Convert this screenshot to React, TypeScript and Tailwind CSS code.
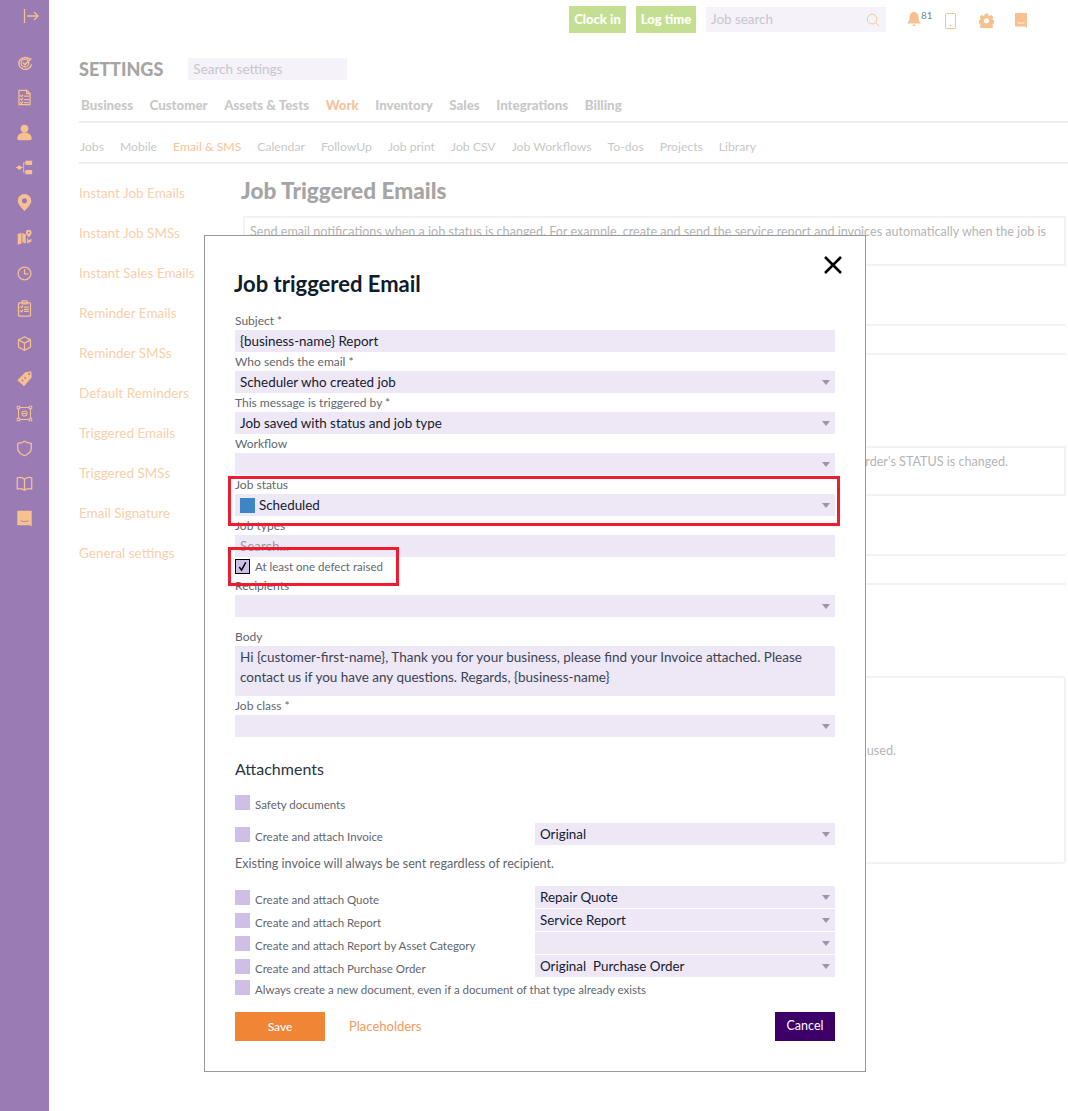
import type { ReactNode } from 'react'

const peach = '#f6c08f'
const iconSize = 'w-[17px] h-[17px]'

function Icon({ children }: { children: ReactNode }) {
  return (
    <svg viewBox="0 0 20 20" className={iconSize} fill="none" stroke={peach} strokeWidth="1.5" strokeLinecap="round" strokeLinejoin="round">
      {children}
    </svg>
  )
}

const sideIcons: ReactNode[] = [
  <Icon key="a">
    <path d="M16.5 6.5A7.500 7 0 1 0 18 13" strokeWidth="1.7" />
    <circle cx="10.5" cy="10.5" r="4.5" />
    <path d="M8.5 10.5l2 2 7-7" strokeWidth="1.7" />
  </Icon>,
  <Icon key="b">
    <path d="M3.5 1.5h9l4 4v13h-13z" />
    <path d="M12.5 1.5v4h4" />
    <path d="M5.5 8l1 1 1.5-2M5.5 12l1 1 1.5-2M5.5 16l1 1 1.5-2M10 8.5h4.5M10 12.5h4.5M10 16h4.5" />
  </Icon>,
  <svg key="c" viewBox="0 0 20 20" className={iconSize} fill={peach}>
    <circle cx="10" cy="5.5" r="4.5" />
    <path d="M1.500 17c0-4 3.500-7 8.500-7s8.500 3 8.500 7c0 1.500-1 2-2 2h-13c-1 0-2-.5-2-2z" />
  </svg>,
  <svg key="d" viewBox="0 0 20 20" className={iconSize} fill={peach}>
    <rect x="11" y="2" width="8" height="5" />
    <rect x="11" y="13" width="8" height="5" />
    <circle cx="4" cy="10" r="2.5" />
    <path d="M0 9.500h8v1H0zM8.500 4H11v1H9.500v10H11v1H8.500z" />
  </svg>,
  <svg key="e" viewBox="0 0 20 20" className={iconSize} fill={peach}>
    <path fillRule="evenodd" d="M10 0a8 8 0 0 1 8 8c0 4.500-5 9-8 12-3-3-8-7.500-8-12a8 8 0 0 1 8-8zm0 5a3 3 0 1 0 0 6 3 3 0 0 0 0-6z" />
  </svg>,
  <svg key="f" viewBox="0 0 20 20" className={iconSize} fill={peach}>
    <path d="M2 6l4.500-1.500V17L2 18.500zM7.500 4.500l4 2V17l-4-1.500zM13 10v6.800l5-1.800V11l-3 2.500z" />
    <path fillRule="evenodd" d="M15 1a3.300 3.300 0 0 1 3.300 3.300c0 2-2.300 4.200-3.300 5.700-1-1.500-3.300-3.700-3.300-5.700A3.300 3.300 0 0 1 15 1zm0 2.200a1.100 1.100 0 1 0 0 2.200 1.100 1.100 0 0 0 0-2.200z" />
  </svg>,
  <Icon key="g">
    <circle cx="10" cy="10" r="7.5" />
    <path d="M10 5.500v5h4" />
  </Icon>,
  <Icon key="h">
    <rect x="3" y="3.500" width="14" height="15.500" rx="1" />
    <rect x="7" y="1" width="6" height="3.500" rx=".5" />
    <path d="M5.500 8l1 1 1.500-2M5.500 13l1 1 1.500-2M10 8.500h4.500M10 11h4.500M10 13.500h4.500" />
  </Icon>,
  <Icon key="i">
    <path d="M10 2l7 3.800v8.400L10 18l-7-3.800V5.800z" />
    <path d="M3 5.800l7 3.800 7-3.800M10 9.600V18" />
  </Icon>,
  <svg key="j" viewBox="0 0 20 20" className={iconSize} fill={peach}>
    <path fillRule="evenodd" d="M11 2.500l7-1 .5 7-9 10.500L1.500 12zM15.500 3.500a1.200 1.200 0 1 0 0 2.400 1.200 1.200 0 0 0 0-2.400z" />
    <path d="M7 11.500l1.500 1.500M10 8.500l1.500 1.500" stroke="#9b7bb3" strokeWidth="1.4" />
  </svg>,
  <Icon key="k">
    <rect x="3" y="3" width="14" height="14" strokeWidth="1.2" />
    <rect x="1.5" y="1.5" width="3" height="3" fill="#9b7bb3" strokeWidth="1.2" />
    <rect x="15.5" y="1.5" width="3" height="3" fill="#9b7bb3" strokeWidth="1.2" />
    <rect x="1.5" y="15.5" width="3" height="3" fill="#9b7bb3" strokeWidth="1.2" />
    <rect x="15.5" y="15.5" width="3" height="3" fill="#9b7bb3" strokeWidth="1.2" />
    <circle cx="10" cy="10" r="3" strokeWidth="1.2" />
    <path d="M8.500 10h3" strokeWidth="1.2" />
  </Icon>,
  <Icon key="l">
    <path d="M10 1.500c2 1.500 5 2.200 8 2.400v5.600c0 4.500-3.500 7.300-8 9-4.500-1.700-8-4.500-8-9V3.900c3-.2 6-.9 8-2.400z" />
  </Icon>,
  <Icon key="m">
    <path d="M10 5C8 3 4.500 2.500 1.500 3.500v13c3-.8 6.500-.5 8.500 1.500 2-2 5.500-2.300 8.500-1.500v-13C15.500 2.500 12 3 10 5zM10 5v13" />
  </Icon>,
  <svg key="n" viewBox="0 0 20 20" className={iconSize} fill={peach}>
    <path d="M1.500 1h17v18.500l-2.500-1.500H1.500z" />
    <path d="M5.500 12.500c2.500 1.500 6.500 1.500 9 0" stroke="#9b7bb3" strokeWidth="1" fill="none" />
  </svg>,
]

const tabs = ['Business', 'Customer', 'Assets & Tests', 'Work', 'Inventory', 'Sales', 'Integrations', 'Billing']
const subTabs = ['Jobs', 'Mobile', 'Email & SMS', 'Calendar', 'FollowUp', 'Job print', 'Job CSV', 'Job Workflows', 'To-dos', 'Projects', 'Library']
const leftNav = ['Instant Job Emails', 'Instant Job SMSs', 'Instant Sales Emails', 'Reminder Emails', 'Reminder SMSs', 'Default Reminders', 'Triggered Emails', 'Triggered SMSs', 'Email Signature', 'General settings']

function Caret() {
  return <span className="ml-auto w-0 h-0 border-x-[4px] border-x-transparent border-t-[5px] border-t-[#9d94a8]" />
}

function Field({ label, value, caret = true, children }: { label: string; value?: string; caret?: boolean; children?: ReactNode }) {
  return (
    <div>
      <div className="h-[19px] text-[12px] leading-[19px] text-[#5f6670]">{label}</div>
      <div className="h-[22px] bg-[#ede7f6] flex items-center px-[5px] text-[13.4px] text-[#14202e]">
        {children}
        {value}
        {caret && <Caret />}
      </div>
    </div>
  )
}

function SmallSelect({ value }: { value?: string }) {
  return (
    <div className="w-[300px] h-[22px] bg-[#ede7f6] flex items-center px-[5px] text-[13.4px] text-[#14202e] whitespace-pre">
      {value}
      <Caret />
    </div>
  )
}

function Check({ label }: { label: string }) {
  return (
    <div className="flex items-center gap-[5px] text-[11.5px] leading-[15px] text-[#5f6670] whitespace-nowrap">
      <span className="w-[15px] h-[15px] bg-[#cfbfe6] shrink-0" />
      <span className="translate-y-[2px]">{label}</span>
    </div>
  )
}

function AttachRow({ label, value }: { label: string; value?: string }) {
  return (
    <div className="h-[22px] flex items-center justify-between mb-[1px]">
      <Check label={label} />
      <SmallSelect value={value} />
    </div>
  )
}

export default function App() {
  return (
    <div className="relative w-[1068px] h-[1111px] overflow-hidden bg-white flex font-['Lato',sans-serif]">
      <aside className="w-[49px] shrink-0 bg-[#9b7bb3] flex flex-col items-center">
        <div className="h-[32px] w-full flex items-center justify-end pr-[10px]">
          <svg viewBox="0 0 16 16" className="w-[16px] h-[16px]" fill="none" stroke={peach} strokeWidth="1.3">
            <path d="M1.500 1v14M4 8h11M11 4l4 4-4 4" />
          </svg>
        </div>
        <div className="flex flex-col gap-[18.1px] pt-[22px] pr-[1px]">
          {sideIcons}
        </div>
      </aside>

      <main className="flex-1 min-w-0 pl-[30px]">
        <div className="h-[40px] flex items-start justify-end pt-[6px]">
          <div className="w-[57px] h-[27px] bg-[#c5df92] text-white text-[13px] font-black flex items-center justify-center">Clock in</div>
          <div className="ml-[10px] w-[60px] h-[27px] bg-[#c5df92] text-white text-[13px] font-black flex items-center justify-center">Log time</div>
          <div className="ml-[10px] mt-[1px] w-[180px] h-[25px] bg-[#f5f2fa] flex items-center pl-[5px] pr-[6px] text-[13.4px] text-[#c6c6cc]">
            Job search
            <svg viewBox="0 0 16 16" className="ml-auto w-[14px] h-[14px]" fill="none" stroke={peach} strokeWidth="1">
              <circle cx="7" cy="7" r="5.5" />
              <path d="M11 11l4 4" />
            </svg>
          </div>
          <div className="relative ml-[20px] w-[16px] mt-[5px]">
            <svg viewBox="0 0 16 16" className="w-[16px] h-[16px]" fill={peach}>
              <path d="M8 1c3 0 4.500 2.500 4.500 5.500 0 3 1 4.500 2.500 6H1c1.500-1.500 2.500-3 2.500-6C3.500 3.500 5 1 8 1zM6.500 13.500h3c0 1-.7 1.500-1.500 1.500s-1.500-.5-1.500-1.500z" />
            </svg>
            <span className="absolute left-[15px] -top-[2px] text-[10px] leading-[12px] text-[#7b8496]">81</span>
          </div>
          <svg viewBox="0 0 11 16" className="ml-[23px] mt-[7px] w-[11px] h-[16px]" fill="none" stroke={peach} strokeWidth="1">
            <rect x=".5" y=".5" width="10" height="15" rx="1" />
            <circle cx="5.5" cy="12.5" r=".5" fill={peach} />
          </svg>
          <svg viewBox="0 0 16 16" className="ml-[23px] mt-[7px] w-[15px] h-[15px]" fill={peach}>
            <path fillRule="evenodd" d="M6.500 .5h3l.5 2 1.500.7 1.800-1 2 2.200-1 1.700.6 1.400 2 .5v3l-2 .5-.6 1.500 1 1.700-2 2.200-1.800-1-1.500.6-.5 2h-3l-.5-2-1.500-.6-1.800 1-2-2.200 1-1.700-.6-1.500-2-.5v-3l2-.5.6-1.400-1-1.700 2-2.200 1.800 1 1.500-.7zM8 5.500a2.700 2.700 0 1 0 0 5.400 2.700 2.700 0 0 0 0-5.400z" />
          </svg>
          <svg viewBox="0 0 14 15" className="ml-[20px] mr-[40px] mt-[7px] w-[14px] h-[15px]" fill={peach}>
            <path d="M1 0h12v15l-2-1.500H1z" />
            <path d="M3.500 9.500c2 1 5 1 7 0" stroke="#fff" strokeWidth=".8" fill="none" />
          </svg>
        </div>

        <div className="h-[40px] pt-[18px] flex items-center">
          <h1 className="text-[18px] leading-[22px] font-black text-[#a5a5a5]">SETTINGS</h1>
          <div className="ml-[25px] w-[159px] h-[22px] bg-[#f5f2fa] flex items-center px-[5px] text-[13.5px] text-[#c6c6cc]">Search settings</div>
        </div>

        <nav className="h-[38px] mt-[5px] border-b-2 border-[#eeeeee] flex items-center gap-[16.5px] pl-[2px] pt-[5px] text-[13.3px] font-black text-[#c8c8c8]">
          {tabs.map((t) => (
            <span key={t} className={t === 'Work' ? 'text-[#f8c39a]' : ''}>{t}</span>
          ))}
        </nav>
        <nav className="h-[41px] border-b-2 border-[#eeeeee] flex items-center gap-[16px] pl-[1px] pt-[9px] text-[12.2px] text-[#c8c8c8]">
          {subTabs.map((t) => (
            <span key={t} className={t === 'Email & SMS' ? 'text-[#f8c39a]' : ''}>{t}</span>
          ))}
        </nav>

        <div className="flex">
          <ul className="w-[162px] shrink-0 pt-[9px] text-[13.5px] text-[#fbcfa9]">
            {leftNav.map((t) => (
              <li key={t} className="h-[40px] leading-[40px]">{t}</li>
            ))}
          </ul>
          <div className="flex-1 min-w-0 pr-[2px]">
            <h2 className="pt-[14px] h-[52px] text-[22.6px] leading-[26px] font-black text-[#a5a5a5]">Job Triggered Emails</h2>
            <div className="ml-[2px] h-[50px] border-2 border-[#f2f2f2] px-[5px] pt-[3px] text-[12.6px] leading-[22px] text-[#b5b5b5] overflow-hidden">
              Send email notifications when a job status is changed. For example, create and send the service report and invoices automatically when the job is
            </div>
            <div className="ml-[2px] mt-[58px] h-[31px] border-y-2 border-[#f2f2f2]" />
            <div className="ml-[2px] mt-[91px] h-[50px] border-2 border-[#f2f2f2] pt-[3px] text-[12.6px] leading-[22px] text-[#b5b5b5] text-right pr-[56px]">
              Send email notifications when a purchase order's STATUS is changed.
            </div>
            <div className="ml-[2px] mt-[58px] h-[31px] border-y-2 border-[#f2f2f2]" />
            <div className="ml-[2px] mt-[91px] h-[188px] border-2 border-[#f2f2f2] rounded-[4px] pt-[62px] text-[12.6px] leading-[22px] text-[#b5b5b5] text-right pr-[168px]">
              used.
            </div>
          </div>
        </div>
      </main>

      <section className="absolute left-[204px] top-[235px] w-[662px] h-[837px] bg-white border border-[#999999] px-[30px] pt-[33px]">
        <svg viewBox="0 0 20 20" className="absolute left-[618px] top-[19px] w-[20px] h-[20px]" fill="none" stroke="#000" strokeWidth="2.5">
          <path d="M2 2l16 16M18 2L2 18" />
        </svg>
        <h3 className="h-[32px] text-[22px] leading-[30px] font-bold text-[#0f1c2b] -ml-[1px]">Job triggered Email</h3>
        <div className="mt-[10px] flex flex-col">
          <Field label="Subject *" value="{business-name} Report" caret={false} />
          <Field label="Who sends the email *" value="Scheduler who created job" />
          <Field label="This message is triggered by *" value="Job saved with status and job type" />
          <Field label="Workflow" />
          <Field label="Job status">
            <span className="w-[15px] h-[15px] bg-[#3d85c6] mr-[4px]" />
            Scheduled
          </Field>
          <Field label="Job types" caret={false}>
            <span className="text-[#9a9aa3]">Search...</span>
          </Field>
          <div className="h-[19px] text-[11.5px] leading-[17px] text-[#5f6670] flex items-center gap-[5px]">
            <span className="w-[15px] h-[15px] bg-[#cfbfe6] border border-black flex items-center justify-center">
              <svg viewBox="0 0 12 12" className="w-[11px] h-[11px]" fill="none" stroke="#000" strokeWidth="1.6">
                <path d="M2.500 6.500l2.500 3.500L9.500 1.500" />
              </svg>
            </span>
            At least one defect raised
          </div>
        </div>
        <Field label="Recipients" />
        <div className="mt-[10px] h-[19px] text-[12px] leading-[19px] text-[#5f6670]">Body</div>
        <div className="h-[50px] bg-[#ede7f6] px-[5px] pt-[1px] text-[13.5px] leading-[20px] text-[#3a4452]">
          {'Hi {customer-first-name}, Thank you for your business, please find your Invoice attached. Please contact us if you have any questions. Regards, {business-name}'}
        </div>
        <Field label="Job class *" />
        <h4 className="mt-[21px] h-[22px] text-[16px] leading-[22px] text-[#2b3442]">Attachments</h4>
        <div className="mt-[15px] h-[15px]"><Check label="Safety documents" /></div>
        <div className="mt-[13px]"><AttachRow label="Create and attach Invoice" value="Original" /></div>
        <p className="mt-[9px] h-[20px] text-[12.6px] leading-[20px] text-[#5f6670]">Existing invoice will always be sent regardless of recipient.</p>
        <div className="mt-[12px]">
          <AttachRow label="Create and attach Quote" value="Repair Quote" />
          <AttachRow label="Create and attach Report" value="Service Report" />
          <AttachRow label="Create and attach Report by Asset Category" />
          <AttachRow label="Create and attach Purchase Order" value="Original  Purchase Order" />
        </div>
        <div className="mt-[3px] h-[15px]"><Check label="Always create a new document, even if a document of that type already exists" /></div>
        <div className="mt-[17px] flex items-center">
          <button className="w-[90px] h-[29px] bg-[#ef8535] text-white text-[12px] font-medium">Save</button>
          <a className="ml-[24px] text-[13px] text-[#f29a5e]">Placeholders</a>
          <button className="ml-auto w-[60px] h-[29px] bg-[#3c0068] text-white text-[12.5px]">Cancel</button>
        </div>
      </section>

      <div className="absolute left-[228px] top-[476px] w-[612px] h-[50px] border-[3px] border-[#ee1c2e]" />
      <div className="absolute left-[228px] top-[547px] w-[171px] h-[39px] border-[3px] border-[#ee1c2e]" />
    </div>
  )
}
